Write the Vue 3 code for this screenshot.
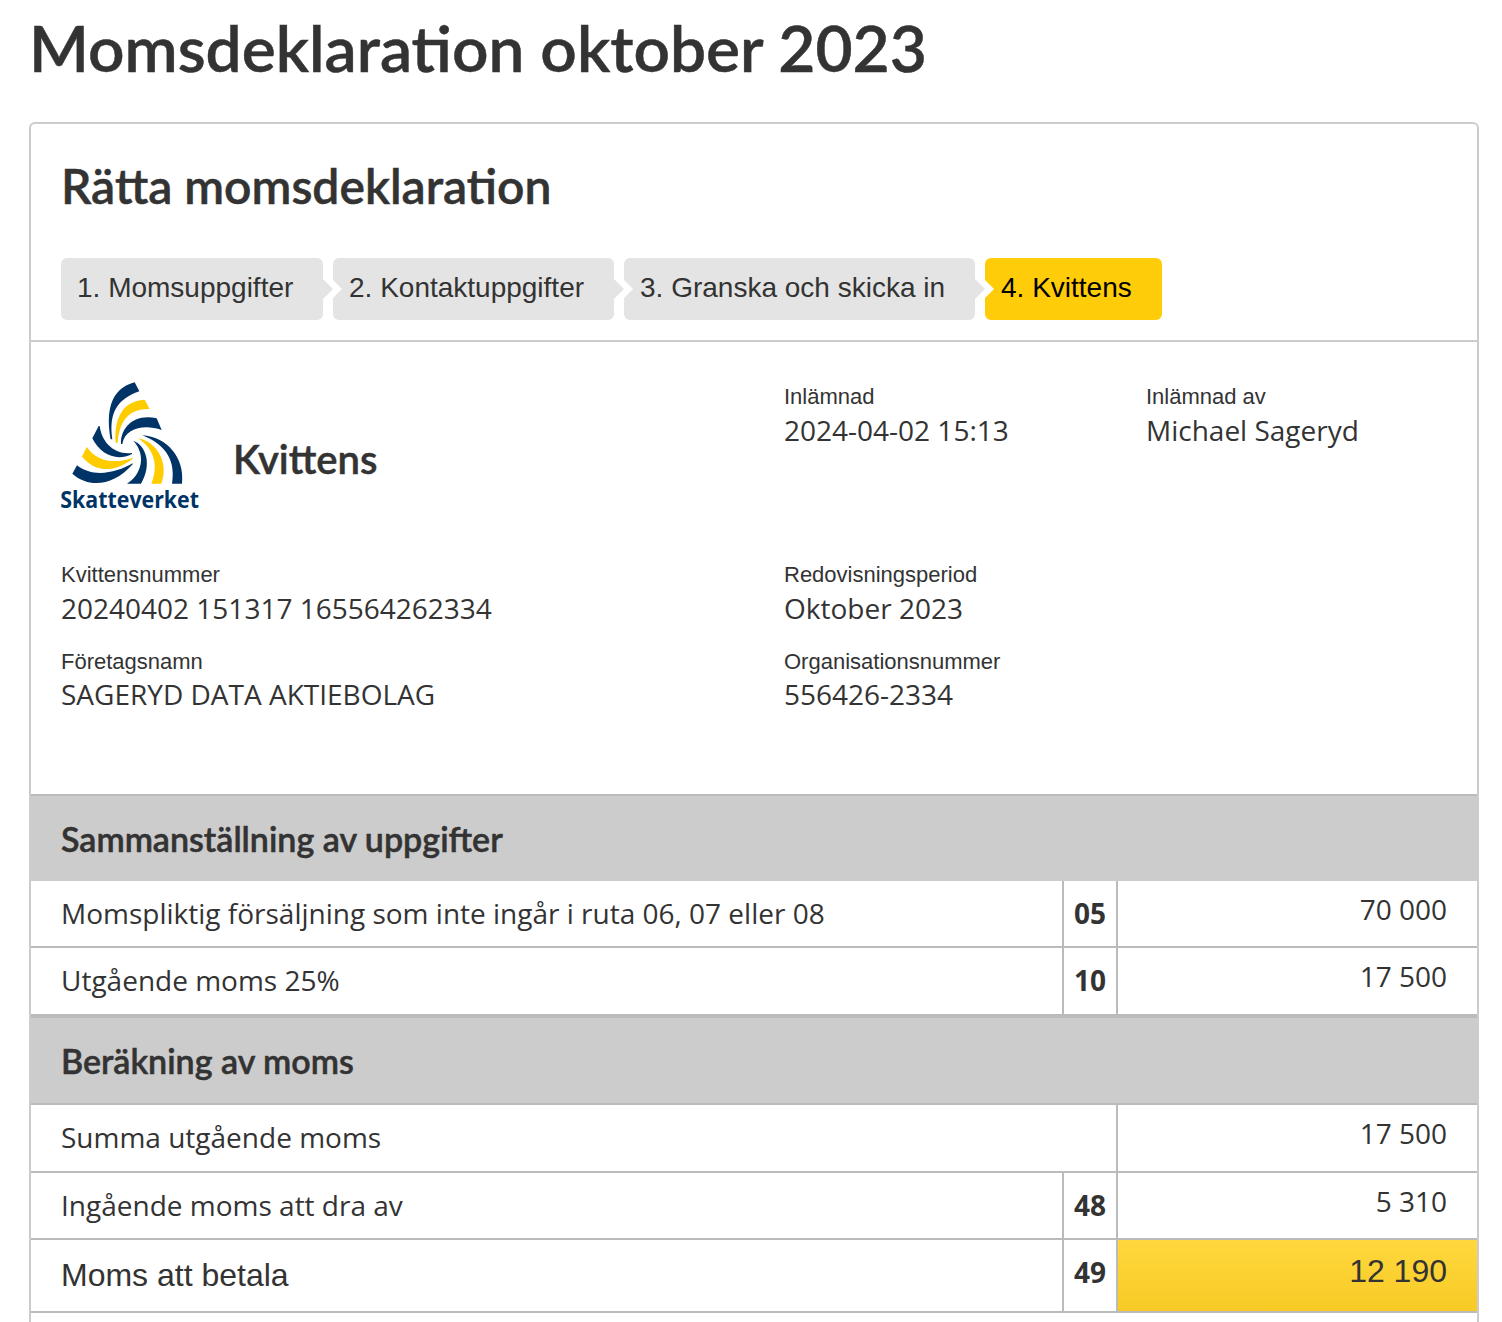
<script setup>
const steps = [
  { label: '1. Momsuppgifter', width: 262 },
  { label: '2. Kontaktuppgifter', width: 281 },
  { label: '3. Granska och skicka in', width: 351 },
  { label: '4. Kvittens', width: 177, active: true },
]

const summary = [
  { label: 'Momspliktig försäljning som inte ingår i ruta 06, 07 eller 08', code: '05', value: '70 000' },
  { label: 'Utgående moms 25%', code: '10', value: '17 500' },
]

const calculation = [
  { label: 'Summa utgående moms', code: '', value: '17 500' },
  { label: 'Ingående moms att dra av', code: '48', value: '5 310' },
  { label: 'Moms att betala', code: '49', value: '12 190', total: true },
]
</script>

<template>
  <main class="page">
    <h1 class="title">Momsdeklaration oktober 2023</h1>
    <section class="card">
      <header class="card-head">
        <h2 class="subtitle">Rätta momsdeklaration</h2>
        <ol class="steps">
          <li
            v-for="step in steps"
            :key="step.label"
            class="step"
            :class="{ active: step.active }"
            :style="{ width: step.width + 'px' }"
          >{{ step.label }}</li>
        </ol>
      </header>

      <div class="receipt">
        <div class="receipt-top">
          <div class="brand">
            <svg class="logo" viewBox="30 30 420 390" width="140" height="130" role="img" aria-label="Skatteverket">
              <g fill="#003366">
                <path d="M182 208C168 130 178 57 254 37L268 64C200 88 176 130 187 208Z" />
                <path d="M213 222C211 175 250 130 320 145L335 180C285 163 226 172 217 222Z" />
                <path d="M146 168L127 205C152 255 200 275 246 252V249C190 255 155 215 149 168Z" />
                <path d="M81 286L67 311C110 350 185 355 248 283V280C200 308 130 325 81 286Z" />
                <path d="M250 212C290 228 306 285 273 341H231C270 317 293 260 250 212Z" />
                <path d="M277 196C350 200 405 263 396 341H366C377 277 352 225 277 196Z" />
              </g>
              <g fill="#ffcc00">
                <path d="M197 218C192 150 215 92 284 89L299 117C240 115 208 150 203 218Z" />
                <path d="M110 231L96 260C135 306 190 311 248 266V263C205 279 146 282 110 231Z" />
                <path d="M264 205C320 215 358 278 334 341H304C325 290 316 240 264 205Z" />
              </g>
              <text x="31" y="414" class="logo-text" textLength="416" lengthAdjust="spacingAndGlyphs">Skatteverket</text>
            </svg>
            <h3 class="receipt-title">Kvittens</h3>
          </div>
          <dl class="field"><dt>Inlämnad</dt><dd>2024-04-02 15:13</dd></dl>
          <dl class="field"><dt>Inlämnad av</dt><dd>Michael Sageryd</dd></dl>
        </div>
        <div class="details">
          <dl class="field"><dt>Kvittensnummer</dt><dd>20240402 151317 165564262334</dd></dl>
          <dl class="field"><dt>Redovisningsperiod</dt><dd>Oktober 2023</dd></dl>
          <dl class="field"><dt>Företagsnamn</dt><dd>SAGERYD DATA AKTIEBOLAG</dd></dl>
          <dl class="field"><dt>Organisationsnummer</dt><dd>556426-2334</dd></dl>
        </div>
      </div>

      <h4 class="band first">Sammanställning av uppgifter</h4>
      <div v-for="row in summary" :key="row.code" class="row">
        <div class="name">{{ row.label }}</div>
        <div class="code">{{ row.code }}</div>
        <div class="value">{{ row.value }}</div>
      </div>
      <h4 class="band second">Beräkning av moms</h4>
      <div v-for="row in calculation" :key="row.label" class="row" :class="{ total: row.total }">
        <div class="name">{{ row.label }}</div>
        <div v-if="row.code" class="code">{{ row.code }}</div>
        <div class="value">{{ row.value }}</div>
      </div>
      <div class="rest"></div>
    </section>
  </main>
</template>

<style>
html,
body {
  margin: 0;
  background: #fff;
  overflow: hidden;
}
</style>

<style scoped>
.page {
  box-sizing: border-box;
  width: 1502px;
  height: 1322px;
  overflow: hidden;
  padding: 0 23px 0 29px;
  color: #333;
  font-family: 'Open Sans', sans-serif;
  font-size: 28px;
  font-variant-ligatures: none;
}
h1, h2, h3, h4, dl, dd, ol {
  margin: 0;
  padding: 0;
}
.title, .subtitle, .receipt-title, .band {
  font-family: Lato, sans-serif;
  font-weight: 600;
  font-variant-ligatures: normal;
  white-space: nowrap;
  -webkit-text-stroke: 0.5px #333;
}
.title {
  height: 122px;
  box-sizing: border-box;
  font-size: 64px;
  line-height: 96px;
}
.card {
  box-sizing: border-box;
  height: 1300px;
  border: 2px solid #ccc;
  border-radius: 6px;
}
.card-head {
  box-sizing: border-box;
  height: 218px;
  padding: 30px 30px 0;
  border-bottom: 2px solid #ccc;
}
.subtitle {
  height: 104px;
  font-size: 48px;
  line-height: 64px;
}
.steps {
  display: flex;
  gap: 10px;
  list-style: none;
}
.step {
  position: relative;
  box-sizing: border-box;
  height: 62px;
  padding-left: 16px;
  border-radius: 6px;
  background: #e4e4e4;
  font: 28px/59px 'Liberation Sans', Arial, sans-serif;
  white-space: nowrap;
}
.step.active {
  background: #ffcc0a;
  color: #000;
}
.step:not(:last-child)::before,
.step:not(:last-child)::after {
  content: '';
  position: absolute;
  z-index: 1;
  clip-path: polygon(0 0, 100% 50%, 0 100%);
}
.step:not(:last-child)::before {
  right: -19px;
  top: 12px;
  width: 19px;
  height: 38px;
  background: #fff;
}
.step:not(:last-child)::after {
  right: -10px;
  top: 21px;
  width: 10px;
  height: 20px;
  background: #e4e4e4;
}
.receipt {
  box-sizing: border-box;
  height: 452px;
  padding: 38px 0 0 30px;
}
.receipt-top {
  display: grid;
  grid-template-columns: 723px 362px 1fr;
  height: 178px;
}
.brand {
  display: flex;
}
.logo {
  flex: none;
  margin: 0 33px 0 -1px;
  overflow: visible;
}
.logo-text {
  fill: #003366;
  font: 700 70px 'Open Sans', sans-serif;
}
.receipt-title {
  font-size: 40px;
  line-height: 158px;
}
.details {
  display: grid;
  grid-template-columns: 723px 1fr;
  grid-auto-rows: 86.5px;
}
.field dt {
  font: 22px/34px 'Liberation Sans', Arial, sans-serif;
}
.field dd {
  line-height: 33px;
  white-space: nowrap;
}
.details .field:nth-child(n + 3) dd {
  margin-top: -1px;
}
.band {
  box-sizing: border-box;
  padding-left: 30px;
  background: #ccc;
  font-size: 34px;
}
.band.first {
  height: 87px;
  border-top: 2px solid #bbb;
  line-height: 85px;
}
.band.second {
  height: 89px;
  border-top: 2px solid #bbb;
  border-bottom: 2px solid #bbb;
  line-height: 85px;
}
.row {
  display: flex;
  box-sizing: border-box;
  height: 68px;
  border-bottom: 2px solid #bbb;
}
.band.first + .row {
  height: 67px;
}
.row:nth-last-child(3) {
  height: 67px;
}
.name {
  flex: 1;
  padding-left: 30px;
  line-height: 64px;
  white-space: nowrap;
}
.code {
  box-sizing: border-box;
  width: 54px;
  border-left: 2px solid #bbb;
  text-align: center;
  font-weight: 700;
  line-height: 64px;
}
.value {
  box-sizing: border-box;
  width: 361px;
  padding-right: 30px;
  border-left: 2px solid #bbb;
  text-align: right;
  line-height: 56px;
}
.row.total {
  height: 73px;
}
.total .name {
  font: 32px/70px 'Liberation Sans', Arial, sans-serif;
}
.total .value {
  background: linear-gradient(#ffd83d, #f7ca26) padding-box;
  font: 32px/62px 'Liberation Sans', Arial, sans-serif;
}
</style>
